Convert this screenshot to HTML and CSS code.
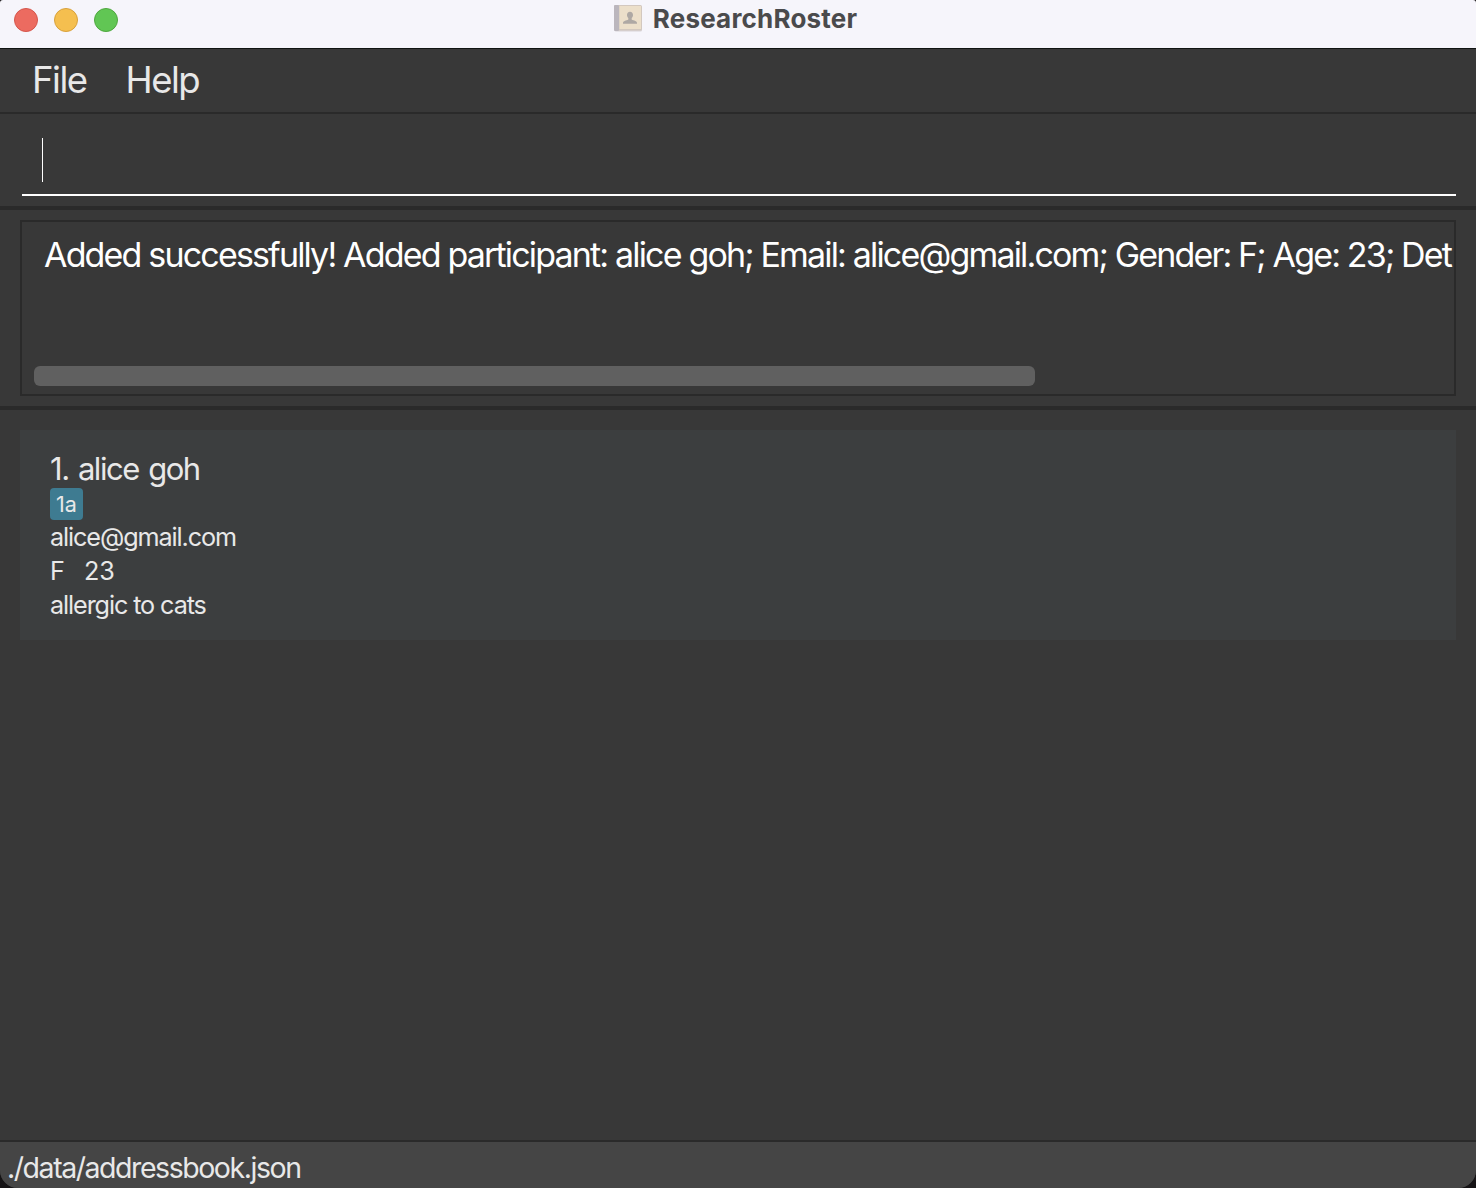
FILE: index.html
```html
<!DOCTYPE html>
<html lang="en">
<head>
<meta charset="utf-8">
<title>ResearchRoster</title>
<link rel="stylesheet" href="styles.css">
</head>
<body>
<div class="window">
  <header class="titlebar">
    <div class="lights"><span class="light close"></span><span class="light minimize"></span><span class="light zoom"></span></div>
    <div class="title">
      <svg class="book" width="28" height="28" viewBox="0 0 28 28">
        <rect x="0.5" y="2" width="27.5" height="25.5" rx="1.5" fill="#d8d4d8"/>
        <rect x="0" y="1" width="28" height="25.5" rx="1.5" fill="#d3c8bf"/>
        <rect x="0" y="1" width="5" height="26" rx="1.2" fill="#bbb6bd"/>
        <rect x="5.5" y="2" width="21.5" height="23" fill="#ecdfca"/>
        <path d="M16 7.800c-1.900 0-3 1.400-3 3.200 0 1.300.6 2.300 1.300 3v1.600c0 .6-5.300 1.100-5.300 3.300v.9h14v-.9c0-2.200-5.300-2.700-5.300-3.300v-1.600c.7-.7 1.300-1.700 1.300-3 0-1.800-1.100-3.200-3-3.200z" fill="#aea8a4"/>
      </svg>
      <span class="title-text">ResearchRoster</span>
    </div>
  </header>
  <nav class="menubar"><span>File</span><span>Help</span></nav>
  <section class="command"><div class="field"><span class="caret"></span></div></section>
  <section class="result">
    <div class="result-box">
      <div class="result-text">Added successfully! Added participant: alice goh; Email: alice@gmail.com; Gender: F; Age: 23; Det</div>
      <div class="scrollbar"></div>
    </div>
  </section>
  <main class="list">
    <article class="card">
      <div class="name">1. alice goh</div>
      <div class="tags"><span class="tag">1a</span></div>
      <div class="line">alice@gmail.com</div>
      <div class="line pair"><span>F</span><span>23</span></div>
      <div class="line">allergic to cats</div>
    </article>
  </main>
  <footer class="status">./data/addressbook.json</footer>
</div>
</body>
</html>
```
FILE: styles.css
```css
* { box-sizing: border-box; }
body {
  margin: 0;
  background: #151315;
  font-family: Inter, "Liberation Sans", sans-serif;
  color: #e8e8e8;
}
.window {
  display: flex;
  flex-direction: column;
  height: 1188px;
  background: #383838;
  border-radius: 3px 3px 18px 18px;
  overflow: hidden;
}
.titlebar {
  display: grid;
  grid-template-columns: 1fr auto 1fr;
  height: 49px;
  padding: 0 14px;
  background: #f6f5fb;
  border-bottom: 1px solid #101412;
}
.lights { display: flex; gap: 16px; padding-top: 8px; }
.light { width: 24px; height: 24px; border-radius: 50%; border: 1px solid; }
.close { background: #ec6b60; border-color: #d5564c; }
.minimize { background: #f5bf4f; border-color: #d8a13c; }
.zoom { background: #61c654; border-color: #4fa73f; }
.title { display: flex; gap: 11px; padding-top: 4px; margin-left: -5px; }
.title-text {
  color: #4a4a4c;
  font-size: 26px;
  line-height: 30px;
  font-weight: 700;
  letter-spacing: 0.2px;
}
.menubar {
  display: flex;
  gap: 39px;
  height: 65px;
  padding: 9px 32px;
  border-bottom: 2px solid #2a2a2a;
  font-size: 36.5px;
  line-height: 44px;
  letter-spacing: -1.5px;
}
.command { height: 96px; padding: 14px 20px 0 22px; border-bottom: 4px solid #2a2a2a; }
.field { height: 68px; padding: 10px 20px; border-bottom: 2px solid #fff; }
.caret { display: block; width: 1px; height: 44px; background: #fff; }
.result { height: 200px; padding: 10px 20px; border-bottom: 4px solid #2a2a2a; }
.result-box {
  display: flex;
  flex-direction: column;
  justify-content: space-between;
  height: 176px;
  padding: 12px 1px 8px 12px;
  border: 2px solid #2a2a2a;
}
.result-text {
  padding-left: 10px;
  color: #fff;
  font-size: 34px;
  line-height: 42px;
  letter-spacing: -1.83px;
  white-space: nowrap;
  overflow: hidden;
}
.scrollbar { width: 1001px; height: 20px; border-radius: 6px; background: #606060; }
.list { flex: 1; padding: 20px; }
.card { height: 210px; padding: 20px 30px; background: #3c3e3f; }
.name { font-size: 31px; line-height: 38px; letter-spacing: -1.45px; word-spacing: 2px; }
.tags { display: flex; height: 32px; }
.tag {
  padding: 0 6px;
  border-radius: 4px;
  background: #3e7b91;
  font-size: 21.5px;
  line-height: 33px;
}
.line { font-size: 25.2px; line-height: 34px; letter-spacing: -1.1px; }
.pair { display: flex; gap: 19px; letter-spacing: 0; }
.status {
  height: 48px;
  padding: 8px 7px;
  background: #454545;
  border-top: 2px solid #2a2a2a;
  font-size: 28.5px;
  line-height: 36px;
  letter-spacing: -1.45px;
}
```
